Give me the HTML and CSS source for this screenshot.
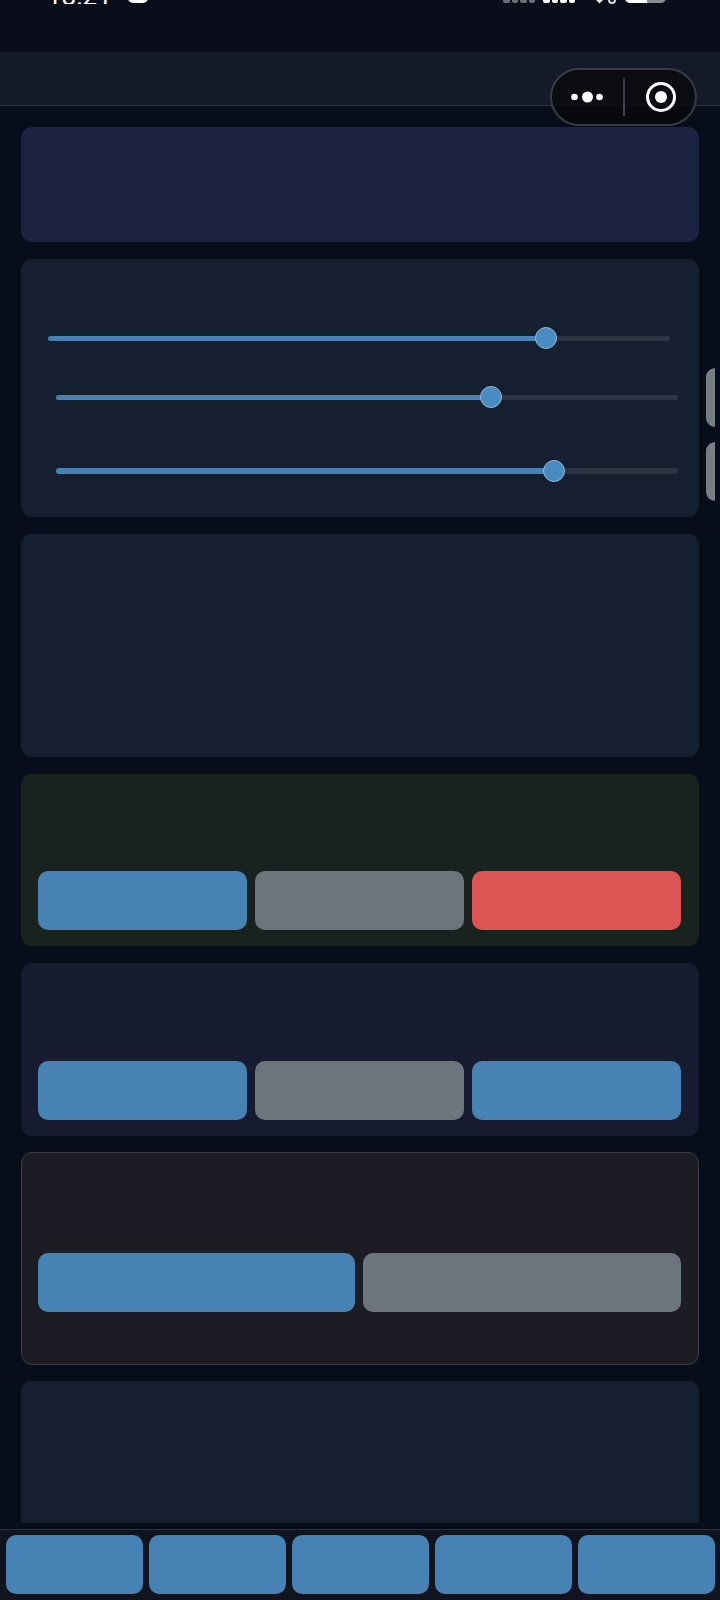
FILE: index.html
```html
<!DOCTYPE html>
<html>
<head>
	<meta charset="UTF-8">
	<title>Controls</title>
	<link rel="stylesheet" href="styles.css">
</head>
<body>
	<div class="page">
		<div class="status-bar">
			<div class="status-row">
				<span class="clock">18:21</span>
				<span class="lock"></span>
				<span class="signal signal-off"><i></i><i></i><i></i><i></i></span>
				<span class="signal"><i></i><i></i><i></i><i></i></span>
				<svg class="wifi" width="21" height="14" viewBox="0 0 21 14">
					<path d="M0 9L9 9L4.5 13.5Z" fill="#e8e8ea"/>
					<circle cx="17" cy="10" r="3" fill="none" stroke="#d8d8dc" stroke-width="2"/>
				</svg>
				<span class="battery"><b></b></span>
			</div>
		</div>
		<div class="nav-bar"></div>

		<!-- menu capsule sits over the nav bar -->
		<div class="capsule">
			<svg width="46" height="14" viewBox="0 0 46 14">
				<circle cx="5.5" cy="7" r="3.3" fill="#fff"/>
				<circle cx="18.5" cy="7" r="5.5" fill="#fff"/>
				<circle cx="30.5" cy="7" r="3.3" fill="#fff"/>
			</svg>
			<span class="capsule-line"></span>
			<svg width="32" height="32" viewBox="0 0 32 32">
				<circle cx="16" cy="16" r="13.5" fill="none" stroke="#fff" stroke-width="3"/>
				<circle cx="16" cy="16" r="6" fill="#fff"/>
			</svg>
		</div>

		<!-- side handles -->
		<div class="side-tab side-tab-top"></div>
		<div class="side-tab side-tab-bottom"></div>

		<div class="content">
			<div class="card card-banner"></div>

			<div class="card card-sliders">
				<div class="slider slider-a">
					<div class="slider-fill" style="width: 80%"><span class="slider-thumb"></span></div>
				</div>
				<div class="slider slider-b">
					<div class="slider-fill" style="width: 70%"><span class="slider-thumb"></span></div>
				</div>
				<div class="slider slider-c">
					<div class="slider-fill" style="width: 80%"><span class="slider-thumb"></span></div>
				</div>
			</div>

			<div class="card card-empty"></div>

			<div class="card card-green">
				<div class="btn-row">
					<button class="btn btn-blue"></button>
					<button class="btn btn-grey"></button>
					<button class="btn btn-red"></button>
				</div>
			</div>

			<div class="card card-indigo">
				<div class="btn-row">
					<button class="btn btn-blue"></button>
					<button class="btn btn-grey"></button>
					<button class="btn btn-blue"></button>
				</div>
			</div>

			<div class="card card-outline">
				<div class="btn-row">
					<button class="btn btn-blue"></button>
					<button class="btn btn-grey"></button>
				</div>
			</div>

			<div class="card card-last"></div>
		</div>

		<div class="bottom-bar">
			<button class="btn btn-blue"></button>
			<button class="btn btn-blue"></button>
			<button class="btn btn-blue"></button>
			<button class="btn btn-blue"></button>
			<button class="btn btn-blue"></button>
		</div>
	</div>
</body>
</html>
```

FILE: styles.css
```css
* {
	box-sizing: border-box;
}
body {
	margin: 0;
	background-color: #070d1a;
	font-family: Roboto, "Liberation Sans", sans-serif;
}
.page {
	position: relative;
	display: flex;
	flex-direction: column;
	height: 1600px;
	overflow: hidden;
}

/* status bar, cut off at the top of the shot */
.status-bar {
	flex: none;
	height: 52px;
	background-color: #0a0e1a;
}
.status-row {
	display: flex;
	align-items: flex-end;
	height: 4px;
	padding-left: 47px;
	overflow: hidden;
}
.clock {
	width: 81px;
	margin-bottom: -5px;
	color: #fff;
	font-size: 26px;
	line-height: 26px;
	flex: none;
}
.lock {
	flex: none;
	width: 20px;
	height: 14px;
	margin-bottom: 1px;
	border-radius: 5px;
	background-color: #fff;
}
.signal {
	flex: none;
	display: flex;
	gap: 2px;
	margin-left: 8px;
	margin-bottom: 1px;
}
.signal i {
	width: 6.5px;
	height: 10px;
	border-radius: 2px;
	background-color: #fff;
}
.signal-off {
	margin-left: 355px;
}
.signal-off i {
	background-color: #6b6e76;
}
.wifi {
	flex: none;
	margin-left: 20px;
}
.battery {
	flex: none;
	width: 41px;
	height: 14px;
	margin-left: 9px;
	margin-bottom: 1px;
	border-radius: 5px;
	background-color: #8b8d94;
	overflow: hidden;
}
.battery b {
	display: block;
	width: 22px;
	height: 14px;
	background-color: #fff;
}

.nav-bar {
	flex: none;
	height: 54px;
	background-color: #141a27;
	border-bottom: 1px solid #2e3342;
}
.capsule {
	position: absolute;
	top: 68px;
	left: 550px;
	display: flex;
	align-items: center;
	width: 147px;
	height: 58px;
	padding-left: 16.5px;
	border: 2px solid #383b44;
	border-radius: 29px;
	background-color: rgba(8, 9, 13, 0.8);
}
.capsule-line {
	width: 1.5px;
	height: 37px;
	margin-left: 8.5px;
	margin-right: 20.5px;
	background-color: #3f424b;
}
.side-tab {
	position: absolute;
	left: 706px;
	width: 9px;
	height: 59px;
	border-radius: 10px 0 0 10px;
	background-color: #787d85;
}
.side-tab-top {
	top: 368px;
}
.side-tab-bottom {
	top: 442px;
}

.content {
	flex: 1;
	min-height: 0;
	display: flex;
	flex-direction: column;
	gap: 16.5px;
	margin-bottom: 6px;
	padding: 21px 21.5px 0 21px;
	overflow: hidden;
}
.card {
	flex: none;
	border-radius: 11px;
}
.card-banner {
	height: 115px;
	background-color: #1b2340;
}
.card-sliders {
	height: 258.5px;
	padding-top: 69px;
	background-color: #161f30;
}
.card-empty {
	height: 223.5px;
	background-color: #161f30;
}
.card-green {
	padding: 97.5px 17.5px 16px 16.5px;
	background-color: #18221f;
}
.card-indigo {
	padding: 98px 17.5px 16px 16.5px;
	background-color: #161b30;
}
.card-outline {
	margin-bottom: -0.5px;
	padding: 99.5px 16.5px 52.5px 15.5px;
	border: 1px solid #3a3d48;
	background-color: #1c1c24;
}
.card-last {
	height: 200px;
	background-color: #161f30;
}

.slider {
	position: relative;
	width: 622px;
	height: 5.5px;
	border-radius: 3px;
	background-color: #2d3342;
}
.slider-a {
	margin-left: 27px;
	margin-top: 8px;
}
.slider-b {
	margin-left: 35px;
	margin-top: 53.5px;
}
.slider-c {
	margin-left: 35px;
	margin-top: 68px;
}
.slider-fill {
	position: relative;
	height: 5.5px;
	border-radius: 3px;
	background-color: #4682b4;
}
.slider-thumb {
	position: absolute;
	top: -8.25px;
	right: -11px;
	width: 22px;
	height: 22px;
	border: 1.5px solid #8fb8d8;
	border-radius: 50%;
	background-color: #4a8bc2;
}

.btn-row {
	display: flex;
	gap: 8px;
}
.btn {
	display: block;
	flex: 1;
	height: 59px;
	padding: 0;
	border: 0;
	border-radius: 10px;
}
.btn-blue {
	background-color: #4682b4;
}
.btn-grey {
	background-color: #6c757d;
}
.btn-red {
	background-color: #dd5454;
}

.bottom-bar {
	flex: none;
	display: flex;
	gap: 5.6px;
	height: 71px;
	padding: 5px 5px 6px 5.5px;
	border-top: 1px solid #2c3039;
	background-color: #10141f;
}
```
